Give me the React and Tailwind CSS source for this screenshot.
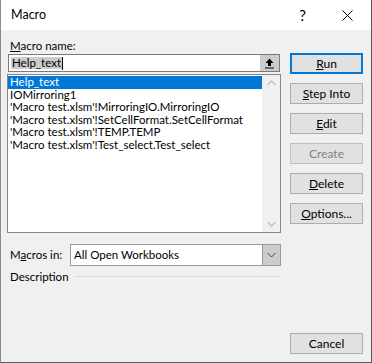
import React from "react";

const macros = [
  "Help_text",
  "IOMirroring1",
  "'Macro test.xlsm'!MirroringIO.MirroringIO",
  "'Macro test.xlsm'!SetCellFormat.SetCellFormat",
  "'Macro test.xlsm'!TEMP.TEMP",
  "'Macro test.xlsm'!Test_select.Test_select",
];

const Btn = ({ children, primary, disabled }) => (
  <button
    className={
      "h-[21px] w-[73px] bg-[#e1e1e1] text-[12px] leading-none " +
      (primary
        ? "border-2 border-[#0078d7] text-black"
        : disabled
        ? "border border-[#bfbfbf] bg-[#cccccc] text-[#838383]"
        : "border border-[#adadad] text-black")
    }
  >
    {children}
  </button>
);

const App = () => {
  return (
    <div
      className="w-[372px] h-[363px] bg-[#f0f0f0] border-l border-l-[#8c8c8c] border-r border-r-[#5a5a5a] border-b border-b-[#5a5a5a] flex flex-col text-black"
      style={{ fontFamily: 'Lato, "Noto Sans", sans-serif' }}
    >
      {/* title bar */}
      <div className="h-[30px] bg-white flex items-center shrink-0">
        <span className="ml-[10px] text-[12.5px]">Macro</span>
        <span className="ml-auto text-[15px] mr-[36px]">?</span>
        <svg width="11" height="11" viewBox="0 0 11 11" className="mr-[18px]">
          <path d="M0.5 0.5 L10.5 10.5 M10.5 0.5 L0.5 10.5" stroke="#000" strokeWidth="1" />
        </svg>
      </div>

      <div className="flex flex-1">
        {/* left column */}
        <div className="ml-[6px] w-[274px] flex flex-col">
          <div className="mt-[7px] ml-[3px] h-[17px] text-[11.5px] leading-[17px]">
            <span className="underline">M</span>acro name:
          </div>
          <div className="ml-[1px] w-[272px] h-[18px] flex border border-[#7a7a7a] bg-white">
            <div className="flex-1 flex items-center pl-[2px]">
              <span className="bg-[#cccccc] text-[11.5px] leading-[12px] px-[1px]">Help_text</span>
              <span className="w-px h-[13px] bg-black" />
            </div>
            <div className="w-[19px] bg-[#cccccc] flex items-center justify-center">
              <svg width="9" height="11" viewBox="0 0 9 11">
                <path d="M4.5 0.5 L8.5 5 L6 5 L6 8 L3 8 L3 5 L0.5 5 Z" fill="#000" />
                <rect x="0" y="9.5" width="9" height="1" fill="#000" />
              </svg>
            </div>
          </div>
          <div className="mt-[2px] h-[159px] border border-[#828790] bg-white flex">
            <div className="flex-1 pt-[1px]">
              {macros.map((m, i) => (
                <div
                  key={m}
                  className={
                    "h-[12.5px] leading-[12.5px] text-[11.5px] pl-[2px] whitespace-nowrap " +
                    (i === 0 ? "bg-[#0078d7] text-white" : "")
                  }
                >
                  {m}
                </div>
              ))}
            </div>
            <div className="w-[18px] bg-[#f0f0f0] flex flex-col items-center justify-between py-[5px]">
              <svg width="9" height="6" viewBox="0 0 9 6">
                <path d="M0.5 5 L4.5 1 L8.5 5" stroke="#c2c2c2" strokeWidth="1.5" fill="none" />
              </svg>
              <svg width="9" height="6" viewBox="0 0 9 6">
                <path d="M0.5 1 L4.5 5 L8.5 1" stroke="#c2c2c2" strokeWidth="1.5" fill="none" />
              </svg>
            </div>
          </div>

          <div className="mt-[11px] flex items-center">
            <span className="ml-[3px] w-[59px] text-[11.5px]">
              M<span className="underline">a</span>cros in:
            </span>
            <div className="ml-[1px] flex-1 h-[22px] border border-[#999999] bg-white flex">
              <span className="flex-1 pl-[3px] text-[11.5px] leading-[20px]">All Open Workbooks</span>
              <div className="w-[18px] bg-[#cccccc] border-l border-[#999999] flex items-center justify-center">
                <svg width="9" height="6" viewBox="0 0 9 6">
                  <path d="M0.5 1 L4.5 5 L8.5 1" stroke="#444" strokeWidth="1" fill="none" />
                </svg>
              </div>
            </div>
          </div>

          <div className="mt-[2px] flex items-center">
            <span className="ml-[3px] text-[11.5px]">Description</span>
            <div className="ml-[6px] flex-1 h-px bg-[#dcdcdc]" />
          </div>
        </div>

        {/* right column */}
        <div className="ml-[9px] w-[73px] flex flex-col">
          <div className="mt-[23px] flex flex-col gap-[9px]">
            <Btn primary>
              <span className="underline">R</span>un
            </Btn>
            <Btn>
              <span className="underline">S</span>tep Into
            </Btn>
            <Btn>
              <span className="underline">E</span>dit
            </Btn>
            <Btn disabled>Create</Btn>
            <Btn>
              <span className="underline">D</span>elete
            </Btn>
            <Btn>
              <span className="underline">O</span>ptions...
            </Btn>
          </div>
          <div className="mt-auto mb-[8px]">
            <Btn>Cancel</Btn>
          </div>
        </div>
      </div>
    </div>
  );
};

export default App;
